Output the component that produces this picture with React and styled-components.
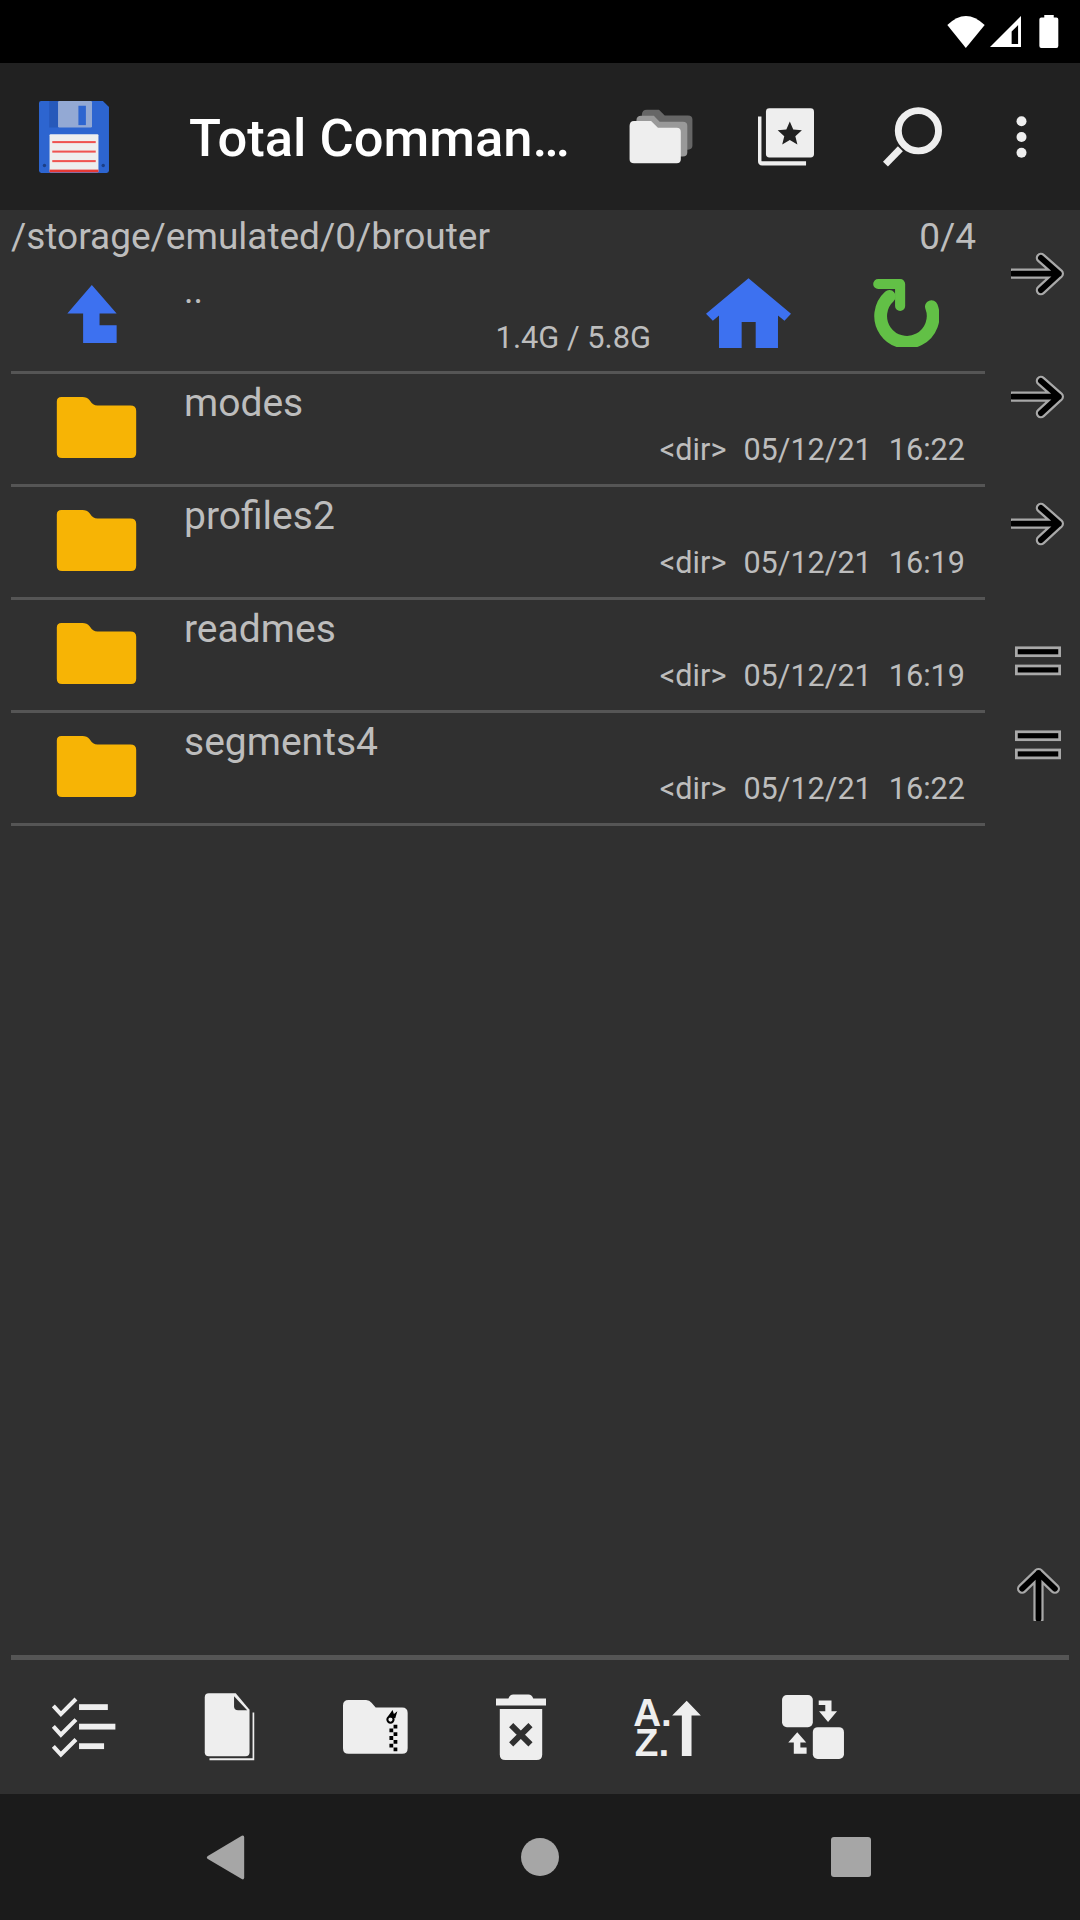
import styled, { createGlobalStyle } from 'styled-components';

const GlobalStyle = createGlobalStyle`
  html, body {
    margin: 0;
    padding: 0;
    background: #303030;
  }
`;

const Screen = styled.div`
  width: 1080px;
  height: 1920px;
  display: flex;
  flex-direction: column;
  font-family: Roboto, "Liberation Sans", sans-serif;
  background: #303030;
  color: #bdbdbd;
  overflow: hidden;
`;

const StatusBar = styled.div`
  height: 63px;
  background: #000;
  display: flex;
  align-items: flex-start;
  justify-content: flex-end;
  padding: 15px 21px 0 0;
  box-sizing: border-box;
  gap: 4px;
`;

const Battery = styled.svg`
  margin-left: 14px;
`;

const AppBar = styled.div`
  height: 147px;
  background: #212121;
  display: flex;
  align-items: center;
  padding-left: 38px;
`;

const Title = styled.div`
  width: 388px;
  margin: 3px 0 0 79px;
  font-size: 52.5px;
  font-weight: 500;
  color: #fff;
  white-space: nowrap;
  overflow: hidden;
  text-overflow: ellipsis;
`;

const Actions = styled.div`
  margin-left: auto;
  padding-right: 13px;
  display: grid;
  grid-template-columns: 124px 126px 126px 92px;
  justify-items: center;
  align-items: center;
`;

const Panel = styled.div`
  flex: 1;
  display: flex;
  min-height: 0;
`;

const ListColumn = styled.div`
  width: 974px;
  margin-left: 11px;
  display: flex;
  flex-direction: column;
`;

const PathBar = styled.div`
  display: flex;
  justify-content: space-between;
  font-size: 37px;
  line-height: 40px;
  padding: 7px 9px 0 0;
`;

const ParentRow = styled.div`
  height: 117px;
  box-sizing: border-box;
  border-bottom: 3px solid #555;
  display: flex;
  align-items: flex-start;
`;

const ParentIcon = styled.div`
  width: 173px;
  padding: 28px 0 0 55px;
  box-sizing: border-box;
`;

const Dots = styled.div`
  width: 201px;
  font-size: 36px;
  line-height: 42px;
  margin-top: 13px;
`;

const Space = styled.div`
  width: 266px;
  margin-top: 63px;
  font-size: 30.8px;
  line-height: 36px;
  text-align: right;
`;

const HomeButton = styled.div`
  margin: 21px 0 0 55px;
`;

const RefreshButton = styled.div`
  margin: 22px 0 0 81px;
`;

const Row = styled.div`
  height: 113px;
  box-sizing: border-box;
  border-bottom: 3px solid #555;
  display: flex;
`;

const FolderBox = styled.div`
  width: 173px;
  box-sizing: border-box;
  padding: 23px 0 0 45px;
`;

const RowBody = styled.div`
  flex: 1;
  display: flex;
  flex-direction: column;
  padding-right: 20px;
`;

const Name = styled.div`
  font-size: 39px;
  line-height: 44px;
  margin-top: 7px;
`;

const Meta = styled.div`
  display: flex;
  justify-content: flex-end;
  gap: 17px;
  font-size: 30.6px;
  line-height: 36px;
  margin-top: 7px;
`;

const SideColumn = styled.div`
  flex: 1;
  display: flex;
  flex-direction: column;
  align-items: center;
  padding: 0 0 34px 2px;
  margin-left: 9px;
`;

const SideSlot = styled.div`
  margin-top: ${p => p.$top}px;
  line-height: 0;
`;

const UpSlot = styled.div`
  margin-top: auto;
  line-height: 0;
`;

const Rule = styled.div`
  height: 5px;
  margin: 0 11px;
  background: #555;
`;

const Toolbar = styled.div`
  height: 134px;
  display: flex;
  align-items: center;
  padding-left: 10px;
`;

const ToolSlot = styled.div`
  width: 146px;
  display: flex;
  justify-content: center;
`;

const NavBar = styled.div`
  height: 126px;
  background: #1b1b1b;
  display: flex;
  align-items: center;
  position: relative;
`;

const NavBack = styled.svg`
  margin-left: 206px;
`;

const NavHome = styled.div`
  width: 38px;
  height: 38px;
  border-radius: 50%;
  background: #a6a6a6;
  margin-left: 276px;
`;

const NavRecent = styled.div`
  width: 40px;
  height: 40px;
  border-radius: 3px;
  background: #a6a6a6;
  margin-left: 272px;
`;

const BLUE = '#3d71f0';
const ICON = '#eeeeee';

const Floppy = () => (
  <svg width="72" height="72" viewBox="112 305 206 212">
    <path d="M118 305H300L318 323V510Q318 517 311 517H119Q112 517 112 510V311Q112 305 118 305Z" fill="#2d65d0" />
    <rect x="142" y="305" width="26" height="78" fill="#2659ba" />
    <rect x="168" y="305" width="100" height="78" rx="4" fill="#93a9d4" />
    <rect x="228" y="319" width="22" height="57" fill="#2d65d0" />
    <rect x="143" y="403" width="144" height="112" rx="3" fill="#eeeeee" />
    <rect x="151" y="423" width="128" height="6" fill="#ef5350" />
    <rect x="151" y="451" width="128" height="6" fill="#ef5350" />
    <rect x="151" y="479" width="128" height="6" fill="#ef5350" />
    <rect x="143" y="507" width="144" height="8" fill="#e53935" />
    <circle cx="128" cy="495" r="5" fill="#1c3f86" />
    <circle cx="301" cy="495" r="5" fill="#1c3f86" />
  </svg>
);

const FolderStack = () => (
  <svg width="64" height="55" viewBox="258 328 186 161">
    <path d="M295 345Q295 330 310 330H345L362 347H430Q443 347 443 359V435Q443 447 430 447H295Z" fill="#666" />
    <path d="M279 362Q279 348 293 348H330L347 365H415Q428 365 428 377V455Q428 467 415 467H279Z" fill="#999" />
    <path d="M259 378Q259 363 272 363H322L342 383H397Q409 383 409 395V475Q409 487 397 487H272Q259 487 259 475Z" fill={ICON} />
  </svg>
);

const StarCards = () => (
  <svg width="56" height="58" viewBox="630 326 162 167">
    <rect x="653" y="326" width="139" height="143" rx="10" fill={ICON} />
    <path d="M630 350V480Q630 492 642 492H769V480H642Q640 480 640 478V350Z" fill={ICON} />
    <path d="M722 365L732 388L757 390L738 407L744 431L722 418L700 431L706 407L687 390L712 388Z" fill="#212121" />
  </svg>
);

const Search = () => (
  <svg width="60" height="60" viewBox="992 320 173 172">
    <circle cx="1097" cy="388" r="58" fill="none" stroke={ICON} strokeWidth="20" />
    <path d="M1045 440L1002 484" fill="none" stroke={ICON} strokeWidth="20" />
  </svg>
);

const Overflow = () => (
  <svg width="11" height="42" viewBox="1386 346 32 126">
    <circle cx="1402" cy="362" r="15" fill={ICON} />
    <circle cx="1402" cy="409" r="15" fill={ICON} />
    <circle cx="1402" cy="456" r="15" fill={ICON} />
  </svg>
);

const Wifi = () => (
  <svg width="40" height="33" viewBox="1175 42 115 98">
    <path d="M1232 140L1177 72Q1232 18 1288 72Z" fill="#fff" />
  </svg>
);

const Signal = () => (
  <svg width="31" height="33" viewBox="1298 44 96 96">
    <path fillRule="evenodd" d="M1394 44V140H1298ZM1385 72L1365 92V131H1385Z" fill="#fff" />
  </svg>
);

const BatteryIcon = () => (
  <Battery width="20" height="33" viewBox="1449 42 59 101">
    <path d="M1464 50V42H1493V50H1501Q1507 50 1507 56V137Q1507 143 1501 143H1455Q1449 143 1449 137V56Q1449 50 1455 50Z" fill="#fff" />
  </Battery>
);

const ParentArrow = () => (
  <svg width="52" height="58" viewBox="193 858 147 173">
    <path d="M266 858L340 943H289V978H340V1031H240V943H193Z" fill={BLUE} />
  </svg>
);

const Home = () => (
  <svg width="85" height="71" viewBox="483 834 248 206">
    <path d="M607 834L731 938L712 958L693 943V1038H628V962H587V1038H521V943L503 958L483 938Z" fill={BLUE} />
  </svg>
);

const Refresh = () => (
  <svg width="67" height="68" viewBox="966 838 194 202">
    <path d="M1015 890A78 78 0 1 0 1140 920" fill="none" stroke="#62c046" strokeWidth="38" strokeLinecap="round" />
    <path d="M982 853H1047V918" fill="none" stroke="#62c046" strokeWidth="30" strokeLinecap="round" strokeLinejoin="round" />
  </svg>
);

const Folder = () => (
  <svg width="81" height="61" viewBox="170 108 242 186">
    <path d="M170 122Q170 108 184 108H248Q262 108 270 118Q280 134 294 134H394Q412 134 412 150V278Q412 294 396 294H186Q170 294 170 278Z" fill="#f7b405" />
  </svg>
);

const RightArrow = () => (
  <svg width="54" height="44" viewBox="93 68 157 122">
    <path d="M95 128H232M180 82L232 128L180 176" fill="none" stroke="#a8a8a8" strokeWidth="30" strokeLinecap="round" strokeLinejoin="round" />
    <path d="M97 128H232M180 82L232 128L180 176" fill="none" stroke="#000" strokeWidth="17" strokeLinecap="round" strokeLinejoin="round" />
  </svg>
);

const Equals = () => (
  <svg width="46" height="30" viewBox="108 1212 134 85">
    <rect x="112" y="1216" width="126" height="23" fill="#000" stroke="#a8a8a8" strokeWidth="8" />
    <rect x="112" y="1269" width="126" height="23" fill="#000" stroke="#a8a8a8" strokeWidth="8" />
  </svg>
);

const UpArrow = () => (
  <svg width="43" height="55" viewBox="1381 80 126 160">
    <path d="M1444 236V100M1396 146L1444 100L1492 146" fill="none" stroke="#a8a8a8" strokeWidth="30" strokeLinecap="round" strokeLinejoin="round" />
    <path d="M1444 234V100M1396 146L1444 100L1492 146" fill="none" stroke="#000" strokeWidth="17" strokeLinecap="round" strokeLinejoin="round" />
  </svg>
);

const Checklist = () => (
  <svg width="65" height="61" viewBox="150 172 188 178">
    <path d="M156 198L178 222L222 178M156 258L178 282L222 238M156 316L178 340L222 296" fill="none" stroke={ICON} strokeWidth="12" />
    <rect x="231" y="193" width="84" height="17" fill={ICON} />
    <rect x="231" y="250" width="106" height="17" fill={ICON} />
    <rect x="231" y="307" width="73" height="17" fill={ICON} />
  </svg>
);

const FilePage = () => (
  <svg width="51" height="68" viewBox="595 162 149 202">
    <path d="M608 163H688L729 212V338Q729 350 717 350H608Q596 350 596 338V175Q596 163 608 163Z" fill={ICON} />
    <path d="M683 172L722 213H695Q683 213 683 201Z" fill="#303030" />
    <path d="M738 220V356H610V362H743V220Z" fill={ICON} />
  </svg>
);

const ZipFolder = () => (
  <svg width="65" height="54" viewBox="998 185 189 157">
    <path d="M1014 185H1065Q1075 185 1081 193L1093 207H1170Q1186 207 1186 223V325Q1186 341 1170 341H1014Q998 341 998 325V201Q998 185 1014 185Z" fill={ICON} />
    <circle cx="1136" cy="242" r="9" fill="none" stroke="#000" strokeWidth="6" />
    <path d="M1128 234L1142 214L1146 226L1156 218L1150 238Z" fill="#000" />
    <path d="M1145 257h11v11h-11zM1133 268h11v11h-11zM1145 279h11v11h-11zM1133 290h11v11h-11zM1145 301h11v11h-11zM1133 312h11v11h-11zM1145 323h11v11h-11z" fill="#000" />
  </svg>
);

const Trash = () => (
  <svg width="50" height="66" viewBox="1444 165 145 191">
    <path d="M1480 178Q1484 166 1494 166H1538Q1548 166 1552 178H1589V198H1444V178Z" fill={ICON} />
    <path d="M1455 208H1578V340Q1578 356 1562 356H1471Q1455 356 1455 340Z" fill={ICON} />
    <path d="M1488 255L1544 311M1544 255L1488 311" fill="none" stroke="#303030" strokeWidth="17" />
  </svg>
);

const SortSvg = styled.svg`
  overflow: visible;
`;

const SortText = styled.text`
  font-family: "Liberation Sans", Arial, sans-serif;
  font-weight: 700;
  font-size: 112px;
  fill: ${ICON};
`;

const SortAz = () => (
  <SortSvg width="68" height="57" viewBox="275 472 196 165">
    <SortText x="275" y="550">A.</SortText>
    <SortText x="280" y="637">Z.</SortText>
    <path d="M430 477L471 520H444V637H416V520H388Z" fill={ICON} />
  </SortSvg>
);

const Swap = () => (
  <svg width="62" height="64" viewBox="707 475 179 185">
    <rect x="707" y="475" width="89" height="93" rx="14" fill={ICON} />
    <rect x="796" y="568" width="90" height="92" rx="14" fill={ICON} />
    <path d="M813 491H850V522H866L840 553L814 522H832V504H813Z" fill={ICON} />
    <path d="M751 583L777 612H760V627H778V645H741V612H725Z" fill={ICON} />
  </svg>
);

const rows = [
  { name: 'modes', date: '05/12/21', time: '16:22' },
  { name: 'profiles2', date: '05/12/21', time: '16:19' },
  { name: 'readmes', date: '05/12/21', time: '16:19' },
  { name: 'segments4', date: '05/12/21', time: '16:22' },
];

const App = () => (
  <Screen>
    <GlobalStyle />
    <StatusBar>
      <Wifi />
      <Signal />
      <BatteryIcon />
    </StatusBar>
    <AppBar>
      <Floppy />
      <Title>Total Commander</Title>
      <Actions>
        <FolderStack />
        <StarCards />
        <Search />
        <Overflow />
      </Actions>
    </AppBar>
    <Panel>
      <ListColumn>
        <PathBar>
          <span>/storage/emulated/0/brouter</span>
          <span>0/4</span>
        </PathBar>
        <ParentRow>
          <ParentIcon>
            <ParentArrow />
          </ParentIcon>
          <Dots>..</Dots>
          <Space>1.4G / 5.8G</Space>
          <HomeButton>
            <Home />
          </HomeButton>
          <RefreshButton>
            <Refresh />
          </RefreshButton>
        </ParentRow>
        {rows.map(row => (
          <Row key={row.name}>
            <FolderBox>
              <Folder />
            </FolderBox>
            <RowBody>
              <Name>{row.name}</Name>
              <Meta>
                <span>&lt;dir&gt;</span>
                <span>{row.date}</span>
                <span>{row.time}</span>
              </Meta>
            </RowBody>
          </Row>
        ))}
      </ListColumn>
      <SideColumn>
        <SideSlot $top={42}><RightArrow /></SideSlot>
        <SideSlot $top={79}><RightArrow /></SideSlot>
        <SideSlot $top={83}><RightArrow /></SideSlot>
        <SideSlot $top={100}><Equals /></SideSlot>
        <SideSlot $top={54}><Equals /></SideSlot>
        <UpSlot><UpArrow /></UpSlot>
      </SideColumn>
    </Panel>
    <Rule />
    <Toolbar>
      <ToolSlot><Checklist /></ToolSlot>
      <ToolSlot><FilePage /></ToolSlot>
      <ToolSlot><ZipFolder /></ToolSlot>
      <ToolSlot><Trash /></ToolSlot>
      <ToolSlot><SortAz /></ToolSlot>
      <ToolSlot><Swap /></ToolSlot>
    </Toolbar>
    <NavBar>
      <NavBack width="39" height="45" viewBox="600 586 110 130">
        <path d="M702 588Q709 585 709 593V708Q709 717 702 713L604 655Q598 651 604 647Z" fill="#a6a6a6" />
      </NavBack>
      <NavHome />
      <NavRecent />
    </NavBar>
  </Screen>
);

export default App;
